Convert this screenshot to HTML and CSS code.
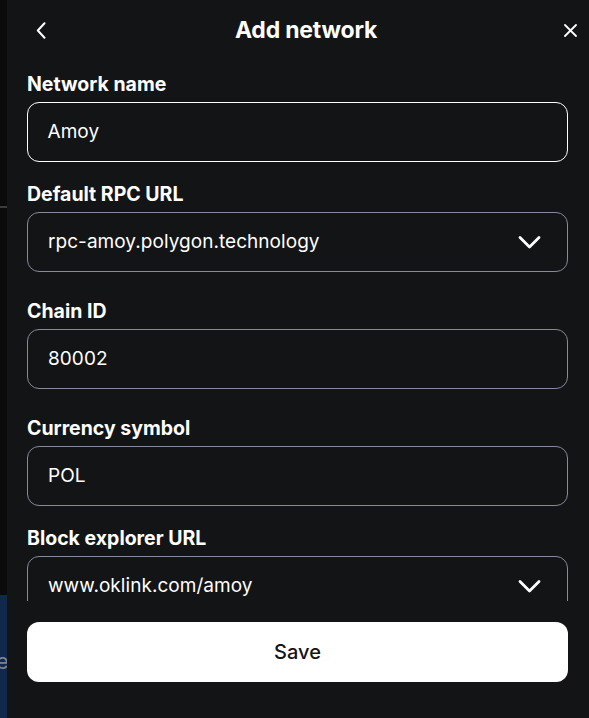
FILE: index.html
```html
<!DOCTYPE html>
<html lang="en">
<head>
<meta charset="utf-8">
<title>Add network</title>
<link rel="stylesheet" href="styles.css">
</head>
<body>
<div class="backdrop">
  <div class="bg-line"></div>
  <div class="bg-panel"><span class="bg-text">e</span></div>
</div>

<div class="modal">
  <header class="modal-header">
    <button class="icon-btn" aria-label="Back">
      <svg width="10" height="17" viewBox="0 0 10 17"><path d="M8.5 1.2 L1.8 8.5 L8.5 15.8" fill="none" stroke="#fff" stroke-width="2" stroke-linecap="round" stroke-linejoin="round"/></svg>
    </button>
    <h1 class="modal-title">Add network</h1>
    <button class="icon-btn" aria-label="Close">
      <svg width="13" height="13" viewBox="0 0 13 13"><path d="M1 1 L12 12 M12 1 L1 12" fill="none" stroke="#fff" stroke-width="1.8" stroke-linecap="round"/></svg>
    </button>
  </header>

  <div class="modal-body">
    <div class="field field-first">
      <label class="field-label">Network name</label>
      <div class="input input-focused"><span class="input-value">Amoy</span></div>
    </div>
    <div class="field field-select">
      <label class="field-label">Default RPC URL</label>
      <div class="input"><span class="input-value">rpc-amoy.polygon.technology</span>
        <svg class="chev" width="23" height="15" viewBox="0 0 23 15"><path d="M2 2.5 L11.5 12 L21 2.5" fill="none" stroke="#fff" stroke-width="2.8" stroke-linecap="round" stroke-linejoin="round"/></svg>
      </div>
    </div>
    <div class="field">
      <label class="field-label">Chain ID</label>
      <div class="input"><span class="input-value">80002</span></div>
    </div>
    <div class="field">
      <label class="field-label">Currency symbol</label>
      <div class="input"><span class="input-value">POL</span></div>
    </div>
    <div class="field field-select">
      <label class="field-label">Block explorer URL</label>
      <div class="input"><span class="input-value">www.oklink.com/amoy</span>
        <svg class="chev" width="23" height="15" viewBox="0 0 23 15"><path d="M2 2.5 L11.5 12 L21 2.5" fill="none" stroke="#fff" stroke-width="2.8" stroke-linecap="round" stroke-linejoin="round"/></svg>
      </div>
    </div>
  </div>

  <footer class="modal-footer">
    <button class="save-btn">Save</button>
  </footer>
</div>
</body>
</html>
```

FILE: styles.css
```css
* { box-sizing: border-box; }
html, body {
  margin: 0;
  padding: 0;
  width: 589px;
  height: 718px;
  overflow: hidden;
  background: #0b0b0c;
  font-family: Inter, "Noto Sans", sans-serif;
  color: #fff;
}

.backdrop {
  position: relative;
  width: 589px;
  height: 718px;
}
.bg-line {
  position: absolute;
  left: 0;
  top: 206px;
  width: 40px;
  height: 2px;
  background: #3b3c3f;
}
.bg-panel {
  position: absolute;
  left: 0;
  top: 595px;
  width: 40px;
  height: 123px;
  background: #10284b;
}
.bg-text {
  position: absolute;
  left: -4px;
  top: 53px;
  font-size: 22px;
  line-height: 26px;
  color: #7b8190;
}

.modal {
  position: absolute;
  left: 7px;
  top: 0;
  width: 598px;
  height: 730px;
  background: #131416;
  display: flex;
  flex-direction: column;
  border-radius: 0 0 8px 8px;
}

.modal-header {
  height: 60px;
  padding: 0 16px;
  display: flex;
  align-items: center;
  justify-content: space-between;
  flex: none;
}
.icon-btn {
  width: 36px;
  height: 36px;
  border: 0;
  padding: 0;
  background: transparent;
  display: flex;
  align-items: center;
  justify-content: center;
}
.modal-title {
  margin: 0;
  font-size: 23px;
  font-weight: 700;
  line-height: 28px;
  letter-spacing: -0.2px;
}

.modal-body {
  height: 541px;
  overflow: hidden;
  padding: 14px 37px 0 20px;
  flex: none;
}
.field { margin-top: 29px; }
.field-first { margin-top: 0; }
.field-select { margin-top: 22px; }
.field-label {
  display: block;
  font-size: 19.5px;
  font-weight: 700;
  line-height: 20px;
  margin-bottom: 8px;
  letter-spacing: 0;
}
.input {
  height: 60px;
  border: 1px solid #858b9a;
  border-radius: 12px;
  padding: 0 26px 0 20px;
  display: flex;
  align-items: center;
  justify-content: space-between;
  background: #131416;
}
.input-focused {
  border: 1.5px solid #ffffff;
  padding-left: 19.5px;
}
.input-value {
  font-size: 19px;
  line-height: 24px;
  font-weight: 400;
  letter-spacing: 0.05px;
}
.chev { display: block; }

.modal-footer {
  flex: 1;
  padding: 21px 37px 0 20px;
}
.save-btn {
  width: 100%;
  height: 60px;
  border: 0;
  border-radius: 12px;
  background: #ffffff;
  color: #131416;
  font-family: Inter, "Noto Sans", sans-serif;
  font-size: 20px;
  font-weight: 500;
}
```
